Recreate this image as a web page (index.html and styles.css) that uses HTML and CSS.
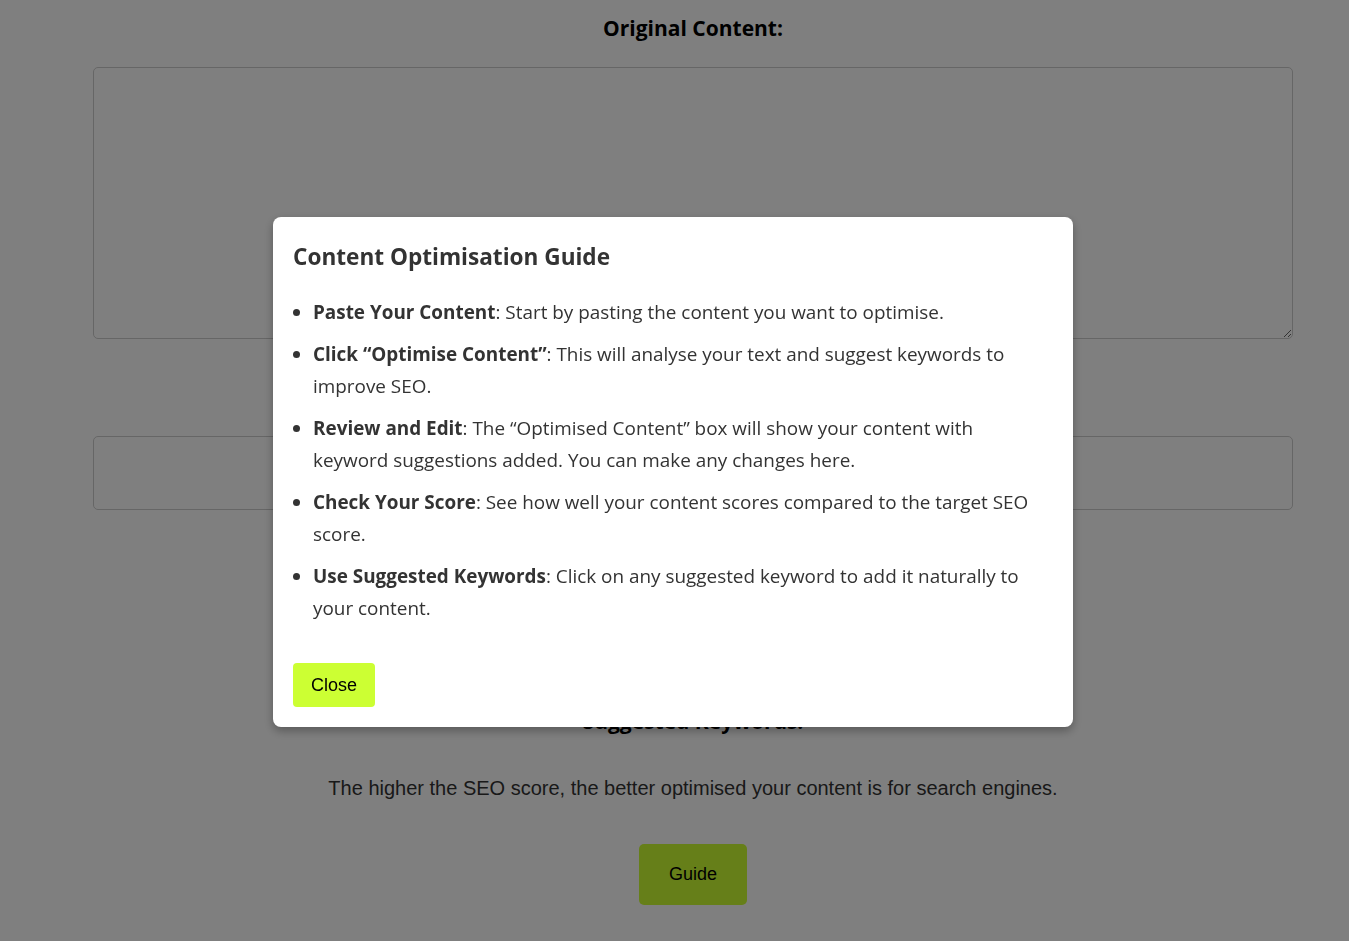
FILE: index.html
```html
<!DOCTYPE html>
<html lang="en">
<head>
<meta charset="utf-8">
<title>Content Optimiser</title>
<link rel="stylesheet" href="styles.css">
</head>
<body>
<div class="page">
  <h3 class="section-title">Original Content:</h3>
  <textarea class="content-input"></textarea>
  <div class="output-box"></div>
  <h3 class="section-title keywords-title">Suggested Keywords:</h3>
  <p class="hint">The higher the SEO score, the better optimised your content is for search engines.</p>
  <div class="actions">
    <button class="btn-guide">Guide</button>
  </div>
</div>

<div class="overlay">
  <div class="modal">
    <h2 class="modal-title">Content Optimisation Guide</h2>
    <ul class="guide-list">
      <li><strong>Paste Your Content</strong>: Start by pasting the content you want to optimise.</li>
      <li><strong>Click “Optimise Content”</strong>: This will analyse your text and suggest keywords to improve SEO.</li>
      <li><strong>Review and Edit</strong>: The “Optimised Content” box will show your content with keyword suggestions added. You can make any changes here.</li>
      <li><strong>Check Your Score</strong>: See how well your content scores compared to the target SEO score.</li>
      <li><strong>Use Suggested Keywords</strong>: Click on any suggested keyword to add it naturally to your content.</li>
    </ul>
    <button class="btn-close">Close</button>
  </div>
</div>
</body>
</html>
```

FILE: styles.css
```css
* { box-sizing: border-box; }

body {
  margin: 0;
  background: #ffffff;
  color: #333333;
  font-family: "Liberation Sans", Arial, sans-serif;
}

.page {
  width: 1200px;
  margin-left: 93px;
  padding-top: 13px;
  text-align: center;
}

.section-title {
  margin: 0;
  font-family: "Open Sans", "Noto Sans", sans-serif;
  font-size: 21px;
  font-weight: 700;
  line-height: 30px;
  color: #000;
}

.content-input {
  display: block;
  width: 1200px;
  height: 272px;
  margin-top: 24px;
  border: 1px solid #cccccc;
  border-radius: 5px;
  background: #ffffff;
  resize: vertical;
}

.output-box {
  height: 74px;
  margin-top: 97px;
  border: 1px solid #cccccc;
  border-radius: 5px;
  background: #ffffff;
}

.keywords-title {
  margin-top: 196px;
}

.hint {
  margin: 40px 0 0;
  font-size: 20px;
  line-height: 24px;
  color: #333333;
}

.actions {
  display: flex;
  justify-content: center;
  margin-top: 44px;
}

.btn-guide {
  font-family: "Liberation Sans", Arial, sans-serif;
  font-size: 18px;
  line-height: 21px;
  padding: 20px 30px;
  border: none;
  border-radius: 5px;
  background: #ccff33;
  color: #000;
}

.overlay {
  position: fixed;
  inset: 0;
  background: rgba(0, 0, 0, 0.5);
  display: flex;
  align-items: center;
  justify-content: center;
}

.modal {
  width: 800px;
  margin: 2px 3px 0 0;
  padding: 20px;
  background: #ffffff;
  border-radius: 8px;
  box-shadow: 0 4px 10px rgba(0, 0, 0, 0.3);
  font-family: "Open Sans", "Noto Sans", sans-serif;
  color: #333333;
}

.modal-title {
  margin: 4px 0 0;
  font-size: 22.6px;
  line-height: 32px;
  font-weight: 700;
  color: #333333;
}

.guide-list {
  margin: 23px 0 0;
  padding-left: 20px;
  font-size: 18.9px;
  line-height: 32px;
}

.guide-list li {
  margin-bottom: 10px;
}

.guide-list strong {
  font-weight: 700;
}

.btn-close {
  display: block;
  margin-top: 39px;
  padding: 11px 18px;
  font-family: "Liberation Sans", Arial, sans-serif;
  font-size: 18px;
  line-height: 22px;
  border: none;
  border-radius: 4px;
  background: #ccff33;
  color: #000;
}
```
